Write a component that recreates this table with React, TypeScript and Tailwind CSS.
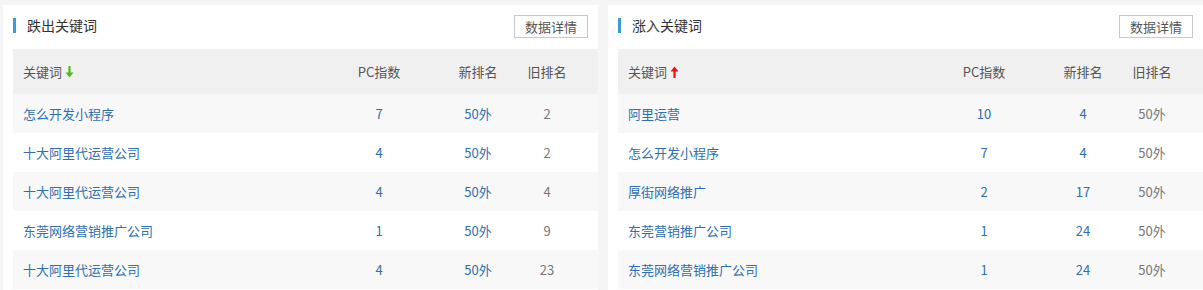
import React from 'react';

type Row = { keyword: string; pc: string; newRank: string; oldRank: string };

const dropped: Row[] = [
  { keyword: '怎么开发小程序', pc: '7', newRank: '50外', oldRank: '2' },
  { keyword: '十大阿里代运营公司', pc: '4', newRank: '50外', oldRank: '2' },
  { keyword: '十大阿里代运营公司', pc: '4', newRank: '50外', oldRank: '4' },
  { keyword: '东莞网络营销推广公司', pc: '1', newRank: '50外', oldRank: '9' },
  { keyword: '十大阿里代运营公司', pc: '4', newRank: '50外', oldRank: '23' },
];

const risen: Row[] = [
  { keyword: '阿里运营', pc: '10', newRank: '4', oldRank: '50外' },
  { keyword: '怎么开发小程序', pc: '7', newRank: '4', oldRank: '50外' },
  { keyword: '厚街网络推广', pc: '2', newRank: '17', oldRank: '50外' },
  { keyword: '东莞营销推广公司', pc: '1', newRank: '24', oldRank: '50外' },
  { keyword: '东莞网络营销推广公司', pc: '1', newRank: '24', oldRank: '50外' },
];

const ArrowDown = () => (
  <svg width="9" height="12" viewBox="0 0 9 12" className="ml-[3px]">
    <path d="M4.5 0v8" stroke="#52b91f" strokeWidth="2.2" />
    <path d="M0.5 6.5L4.5 11.5L8.5 6.5Z" fill="#52b91f" />
  </svg>
);

const ArrowUp = () => (
  <svg width="9" height="12" viewBox="0 0 9 12" className="ml-[3px]">
    <path d="M4.5 12V4" stroke="#ee1111" strokeWidth="2.2" />
    <path d="M0.5 5.5L4.5 0.5L8.5 5.5Z" fill="#ee1111" />
  </svg>
);

const Panel = ({ title, rows, up }: { title: string; rows: Row[]; up?: boolean }) => (
  <div className="w-[595px] bg-white pl-[10px]">
    <div className="flex h-[44px] items-start justify-between pr-[10px]">
      <div className="mt-[10px] flex h-[20px] items-center">
        <span className="h-[15px] w-[3px] bg-[#3a9ad9]"></span>
        <span className="ml-[11px] text-[14px] leading-[20px] text-[#333]">{title}</span>
      </div>
      <button className="mt-[10px] h-[23px] w-[74px] border border-[#c8c8c8] bg-white text-[13px] leading-[21px] text-[#555]">
        数据详情
      </button>
    </div>
    <div className="grid h-[45px] grid-cols-[307px_118px_80px_58px_1fr] items-center bg-[#f0f0f0] text-[13px] text-[#555]">
      <div className="flex items-center pl-[10px]">
        关键词
        {up ? <ArrowUp /> : <ArrowDown />}
      </div>
      <div className="text-center">PC指数</div>
      <div className="text-center">新排名</div>
      <div className="text-center">旧排名</div>
      <div></div>
    </div>
    {rows.map((r, i) => (
      <div
        key={i}
        className={`grid h-[39px] grid-cols-[307px_118px_80px_58px_1fr] items-center text-[13px] ${i % 2 === 0 ? 'bg-[#f8f8f8]' : 'bg-white'}`}
      >
        <div className="pl-[10px] text-[#2f6fb3]">{r.keyword}</div>
        <div className="text-center text-[#2f6fb3]">{r.pc}</div>
        <div className="text-center text-[#2f6fb3]">{r.newRank}</div>
        <div className="text-center text-[#777]">{r.oldRank}</div>
        <div></div>
      </div>
    ))}
  </div>
);

export default function App() {
  return (
    <div
      className="flex h-[290px] gap-[10px] overflow-hidden bg-[#f5f5f5] pl-[3px] pt-[5px]"
      style={{ fontFamily: '"Noto Sans CJK SC", "Liberation Sans", sans-serif' }}
    >
      <Panel title="跌出关键词" rows={dropped} />
      <Panel title="涨入关键词" rows={risen} up />
    </div>
  );
}
